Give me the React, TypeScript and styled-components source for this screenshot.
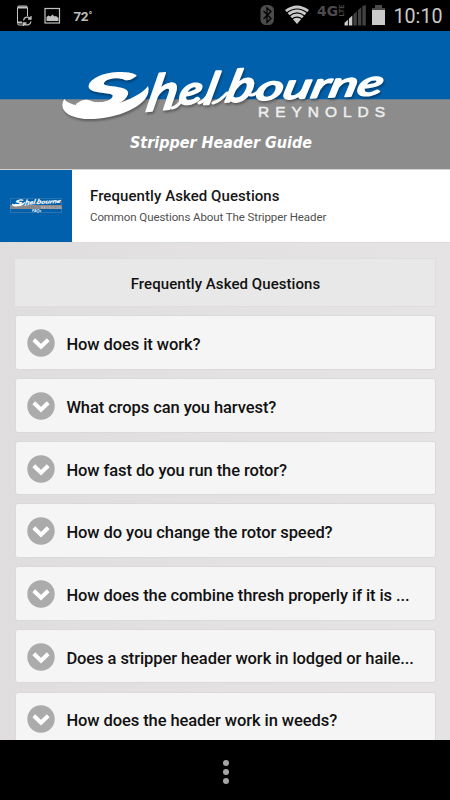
import React from "react";
import styled, { createGlobalStyle } from "styled-components";

const GlobalStyle = createGlobalStyle`
  * { box-sizing: border-box; }
  body { margin: 0; background: #000; font-family: Roboto, "Liberation Sans", sans-serif; }
`;

const Screen = styled.main`
  width: 450px;
  height: 800px;
  display: flex;
  flex-direction: column;
  overflow: hidden;
  background: #000;
`;

const StatusBar = styled.header`
  height: 31px;
  flex: none;
  color: #c2c2c2;
  background: #000;
  display: flex;
  justify-content: space-between;
`;

const StatusIcons = styled.svg`
  display: block;
`;

const Banner = styled.section`
  height: 138px;
  flex: none;
  background: linear-gradient(#0060ab 0 68px, #638096 68px 69px, #8c8c8c 69px);
`;

const BannerArt = styled.svg`
  display: block;
`;

const LogoShadow = styled.g`
  filter: drop-shadow(1px 2px 1px #0005);
`;

const TitleCard = styled.section`
  height: 74px;
  flex: none;
  display: flex;
  background: #fff;
  border-top: 1px solid #d4d4d4;
  border-bottom: 1px solid #dcdcdc;
`;

const Thumb = styled.div`
  width: 72px;
  height: 72px;
  background: #0060ab;
  display: flex;
  align-items: center;
  justify-content: center;
`;

const TitleText = styled.div`
  padding: 17px 0 0 18px;
`;

const Title = styled.h1`
  margin: 0;
  font-size: 15px;
  line-height: 19px;
  font-weight: 500;
  letter-spacing: 0.07px;
  color: #171717;
`;

const Subtitle = styled.p`
  margin: 3px 0 0;
  font-size: 11.5px;
  line-height: 16px;
  letter-spacing: -0.09px;
  color: #505050;
`;

const Content = styled.section`
  flex: 1;
  min-height: 0;
  overflow: hidden;
  padding: 15px 14px 0;
  background: linear-gradient(90deg, #dfdddd, #e3e1e1 50%, #e5e3e4);
`;

const SectionHeading = styled.h2`
  margin: 0 0 8.4px;
  height: 49px;
  line-height: 50px;
  text-align: center;
  font-size: 15px;
  font-weight: 500;
  letter-spacing: 0.07px;
  text-indent: 1px;
  color: #111;
  background: #e8e8e8;
  border: 1px solid #dedede;
`;

const QuestionList = styled.div`
  display: grid;
  grid-auto-rows: 54.5px;
  gap: 8.2px;
  padding: 0 0 0 1px;
`;

const Question = styled.button`
  border: 1px solid #dadada;
  border-radius: 3px;
  background: #f5f5f5;
  padding: 1px 12px 0 11px;
  display: flex;
  align-items: center;
  gap: 11.4px;
  color: #111;
  text-align: left;
  font-family: Roboto, sans-serif;
  min-width: 0;
`;

const ArrowIcon = styled.svg`
  flex: none;
`;

const QuestionLabel = styled.span`
  font-size: 16.5px;
  line-height: 24px;
  font-weight: 500;
  letter-spacing: -0.08px;
  white-space: nowrap;
  padding-top: 4px;
`;

const NavBar = styled.footer`
  height: 60px;
  flex: none;
  display: flex;
  justify-content: center;
  align-items: center;
  padding: 4px 0 0 1px;
  background: #000;
`;

const MenuDots = styled.div`
  display: grid;
  gap: 3px;
`;

const Dot = styled.i`
  width: 6px;
  height: 6px;
  border-radius: 50%;
  background: #a5a5a5;
`;

const questions = [
  "How does it work?",
  "What crops can you harvest?",
  "How fast do you run the rotor?",
  "How do you change the rotor speed?",
  "How does the combine thresh properly if it is ...",
  "Does a stripper header work in lodged or haile...",
  "How does the header work in weeds?",
];

function DownArrow() {
  return (
    <ArrowIcon width="28" height="28" viewBox="0 0 28 28">
      <circle cx="14" cy="14" r="13.7" fill="#ababab" />
      <path d="M6.8 10.8 14 17.8 21.2 10.8" fill="none" stroke="#fff" strokeWidth="4" />
    </ArrowIcon>
  );
}

function Wordmark() {
  return (
    <g fill="#fff" stroke="#fff" strokeLinejoin="round" fontFamily="Lato, sans-serif" fontStyle="italic" fontWeight="500">
      <path stroke="none" d="M64.5 68C68 76 97 78 122 71C133 67 144 61 148 55C153 70 127 86 94 88C70 89 57 79 64.5 68Z" />
      <text transform="translate(77 77) rotate(-3) skewX(-18) scale(2.2 1)" fontSize="45" strokeWidth="2.4">S</text>
      <text transform="translate(145 80.5) rotate(-6) skewX(-18)" fontSize="49" strokeWidth="2" textLength="30" lengthAdjust="spacingAndGlyphs">h</text>
      <text transform="translate(178 74) rotate(-6) skewX(-14)" fontSize="38" strokeWidth="2" textLength="23" lengthAdjust="spacingAndGlyphs">e</text>
      <text transform="translate(203 73) skewX(-14)" fontSize="44" strokeWidth="2.6">l</text>
      <text transform="translate(224 71) rotate(-2) skewX(-16)" fontSize="44" strokeWidth="2" textLength="27" lengthAdjust="spacingAndGlyphs">b</text>
      <text transform="translate(254 69.5) rotate(-2.5) skewX(-16)" fontSize="35" strokeWidth="1.6" textLength="127" lengthAdjust="spacingAndGlyphs">ourne</text>
      <path d="M172 77Q178 76 182 68M199 72Q205 70 209 62M213 72Q220 70 227 62M250 64Q256 64 260 58" fill="none" strokeWidth="3" strokeLinecap="round" />
    </g>
  );
}

function BannerLogo() {
  return (
    <BannerArt width="450" height="138" viewBox="0 0 450 138">
      <LogoShadow>
        <Wordmark />
      </LogoShadow>
      <text x="258" y="86" fill="#eee" stroke="#eee" strokeWidth=".5" fontFamily="Liberation Sans, sans-serif" fontSize="15.5" textLength="127">REYNOLDS</text>
      <text x="130" y="117" fill="#fff" fontFamily="DejaVu Sans, sans-serif" fontWeight="700" fontStyle="italic" fontSize="15" textLength="182" lengthAdjust="spacingAndGlyphs">Stripper Header Guide</text>
    </BannerArt>
  );
}

function ThumbLogo() {
  return (
    <svg width="52" height="16" viewBox="0 0 52 16">
      <rect x=".5" y=".5" width="51" height="14" fill="none" stroke="#3c7cad" strokeWidth=".7" />
      <rect x="0" y="7" width="52" height="4" fill="#898989" />
      <g transform="translate(-7.5 -4.8) scale(.152)">
        <Wordmark />
      </g>
      <text x="31" y="10.6" fontFamily="Liberation Sans, sans-serif" fontSize="2.7" fill="#ddd" textLength="20">REYNOLDS</text>
      <text x="22" y="14" fontFamily="Liberation Sans, sans-serif" fontStyle="italic" fontWeight="700" fontSize="3.5" fill="#fff">FAQs</text>
    </svg>
  );
}

function LeftStatus() {
  return (
    <StatusIcons width="110" height="31" viewBox="0 0 110 31">
      <rect x="17.5" y="6" width="10" height="19" rx="1.5" fill="none" stroke="#c2c2c2" />
      <path d="M18 7.5h9M18 22.5h5" stroke="#c2c2c2" strokeWidth="2" />
      <circle cx="27" cy="21" r="5" fill="#000" />
      <path d="M23.5 20.5a4 4 0 0 1 7-2M31 16v3h-3M31 21.5a4 4 0 0 1-7 2M23.5 26v-3h3" fill="none" stroke="#c2c2c2" strokeWidth="1.3" />
      <rect x="45" y="8.5" width="14.5" height="14.5" fill="none" stroke="#c2c2c2" strokeWidth="1.2" />
      <path d="M46.5 21v-4l2-1.5 2 1 2-2 2 2 1.5-.5 2.5 2v3Z" fill="#c2c2c2" />
      <text x="73.5" y="20.5" fontFamily="Roboto" fontWeight="700" fontSize="13.5" fill="#bdbdbd" textLength="15">72</text>
      <text x="88.5" y="19" fontFamily="Roboto" fontWeight="700" fontSize="10" fill="#bdbdbd">°</text>
    </StatusIcons>
  );
}

function RightStatus() {
  return (
    <StatusIcons width="200" height="31" viewBox="250 0 200 31">
      <rect x="260.5" y="5" width="13.5" height="20" rx="5.5" fill="#4b4b4b" />
      <path d="m263.5 11 7.5 7.5-4 4V8l4 3.5-7.5 7.5" fill="none" stroke="#000" strokeWidth="1.3" />
      <path d="M285 10Q297 1 309 10L297 24Z" fill="#cacaca" />
      <path d="M286.5 13Q297 5 307.5 13M289 16.3Q297 9.5 305 16.3M291.5 19.4Q297 15 302.5 19.4" fill="none" stroke="#000" strokeWidth="1.2" />
      <text x="317" y="16" fontFamily="DejaVu Sans, sans-serif" fontWeight="700" fontSize="14.5" fill="#4b4b4b" textLength="21" lengthAdjust="spacingAndGlyphs">4G</text>
      <text transform="translate(344.2 16.5) rotate(-90)" fontFamily="Roboto" fontWeight="700" fontSize="7.5" fill="#4b4b4b" textLength="12" lengthAdjust="spacingAndGlyphs">LTE</text>
      <path d="M344.5 25.5v-2.7l3.4-3v5.7Zm4.4 0v-6.7l3.4-3.4v10.1Z" fill="#cacaca" />
      <path d="M353.4 25.5V14.4l3.4-3.2v14.3Zm4.5 0V10.2l3.4-3v18.3Zm4.5 0V6.3l3.4-1.3v20.5Z" fill="#424242" />
      <path d="M375 5h7v3h3v3h-13V8h3Z" fill="#4b4b4b" />
      <rect x="372" y="10" width="13" height="15" fill="#cacaca" />
      <text x="393.5" y="22.7" fontFamily="Roboto" fontSize="20.5" fill="#cacaca" textLength="49" lengthAdjust="spacingAndGlyphs">10:10</text>
    </StatusIcons>
  );
}

export default function App() {
  return (
    <>
      <GlobalStyle />
      <Screen>
        <StatusBar><LeftStatus /><RightStatus /></StatusBar>
        <Banner><BannerLogo /></Banner>
        <TitleCard>
          <Thumb><ThumbLogo /></Thumb>
          <TitleText>
            <Title>Frequently Asked Questions</Title>
            <Subtitle>Common Questions About The Stripper Header</Subtitle>
          </TitleText>
        </TitleCard>
        <Content>
          <SectionHeading>Frequently Asked Questions</SectionHeading>
          <QuestionList>
            {questions.map((question) => (
              <Question key={question}>
                <DownArrow />
                <QuestionLabel>{question}</QuestionLabel>
              </Question>
            ))}
          </QuestionList>
        </Content>
        <NavBar><MenuDots><Dot /><Dot /><Dot /></MenuDots></NavBar>
      </Screen>
    </>
  );
}
